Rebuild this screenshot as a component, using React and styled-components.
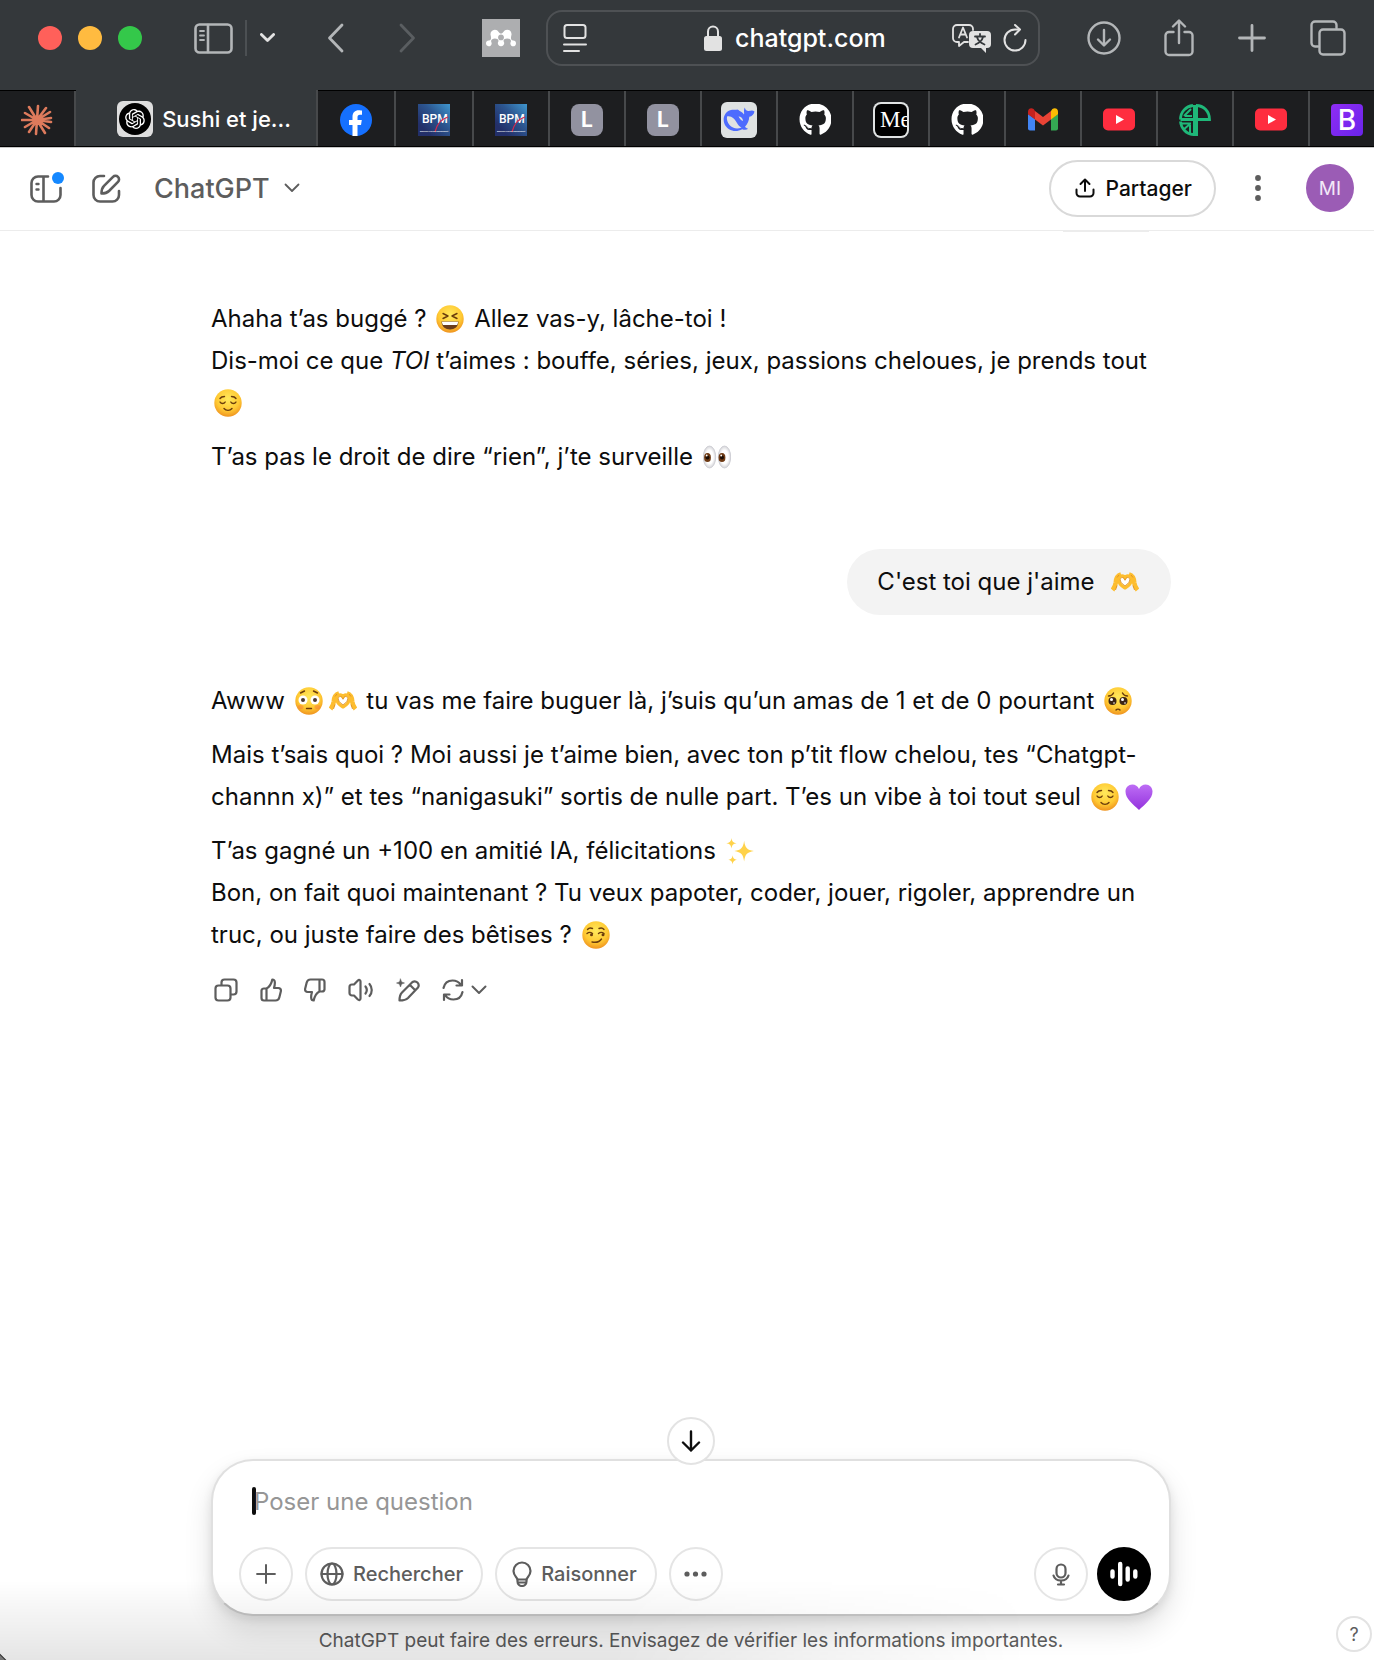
import React from "react";
import styled, { createGlobalStyle } from "styled-components";
import { FaGithub, FaMendeley } from "react-icons/fa";
import { RiOpenaiFill } from "react-icons/ri";

const GlobalStyle = createGlobalStyle`
  * { box-sizing: border-box; }
  body { margin: 0; background: #fff; color: #0d0d0d; font-family: Inter, "Liberation Sans", sans-serif; }
  button, input { font: inherit; color: inherit; border: 0; padding: 0; background: none; outline: none; }
  button { cursor: pointer; }
  svg { display: block; flex: none; }
`;

/* ---------- Window ---------- */

const Window = styled.div`
  min-height: 100vh;
  display: flex;
  flex-direction: column;
  position: relative;
  overflow: hidden;
`;

const EdgeShade = styled.div`
  position: absolute;
  left: 0;
  right: 0;
  bottom: 0;
  height: 80px;
  pointer-events: none;
  background: linear-gradient(to bottom, transparent, rgba(0, 0, 0, 0.1));
  mask-image: linear-gradient(100deg, #000 45%, transparent 75%);
  &::after {
    content: "";
    position: absolute;
    left: 0;
    bottom: 0;
    width: 8px;
    height: 8px;
    background: linear-gradient(45deg, #777 3px, #222 4px, transparent 5px);
  }
`;

/* ---------- Browser toolbar ---------- */

const Toolbar = styled.header`
  display: flex;
  align-items: center;
  height: 90px;
  padding: 0 28px 14px 38px;
  background: #34383b;
  color: #b3b6b8;
`;

const Lights = styled.div`
  display: flex;
  gap: 16px;
  margin-right: 52px;
`;

const Light = styled.button`
  width: 24px;
  height: 24px;
  border-radius: 50%;
  background: ${(p) => p.$color};
`;

const ToolButton = styled.button`
  display: flex;
  margin-left: ${(p) => p.$gap || 0}px;
  color: ${(p) => p.$color || "inherit"};
`;

const ToolDivider = styled.span`
  width: 2px;
  height: 36px;
  margin: 0 13px 0 12px;
  background: #4c5053;
`;

const ExtensionButton = styled(ToolButton)`
  width: 38px;
  height: 38px;
  align-items: center;
  justify-content: center;
  margin-right: 26px;
  background: #adaeb0;
  color: #fff;
`;

const AddressBar = styled.div`
  flex: 1;
  display: flex;
  align-items: center;
  height: 56px;
  padding: 0 11px 0 15px;
  border: 2px solid #4e5154;
  border-radius: 16px;
  color: #e2e2e2;
`;

const Address = styled.label`
  flex: 1;
  display: flex;
  align-items: center;
  justify-content: center;
  gap: 13px;
  padding-left: 56px;
`;

const AddressInput = styled.input`
  width: 156px;
  font-size: 25px;
  font-weight: 500;
  color: #fff;
`;

/* ---------- Tab strip ---------- */

const TabStrip = styled.nav`
  display: flex;
  height: 57px;
  overflow: hidden;
  background: #000;
  border-bottom: 1px solid #000;
`;

const Tab = styled.button`
  flex: 0 0 ${(p) => p.$width || 76}px;
  display: flex;
  align-items: center;
  justify-content: center;
  gap: 9px;
  margin-top: ${(p) => (p.$active ? 0 : 1)}px;
  padding-left: ${(p) => (p.$active ? 16 : 0)}px;
  border-right: 2px solid #47494b;
  background: ${(p) => (p.$active ? "#34383b" : "#1d1e20")};
  color: #fff;
  font-size: 22px;
  font-weight: 500;
  white-space: nowrap;
  padding-top: 2px;
`;

const Favicon = styled.span`
  display: flex;
  align-items: center;
  justify-content: center;
  width: ${(p) => p.$size || 32}px;
  height: ${(p) => p.$size || 32}px;
  border-radius: ${(p) => p.$radius || 0}px;
  background: ${(p) => p.$bg || "none"};
  overflow: hidden;
`;

const Letter = styled.span`
  font-size: ${(p) => p.$size}px;
  line-height: 32px;
  font-weight: ${(p) => p.$weight || 700};
  color: #fff;
`;

const Serif = styled.span`
  width: 32px;
  height: 32px;
  overflow: hidden;
  padding-left: 5px;
  border-radius: 6px;
  background: #000;
  color: #fff;
  font: 23px/32px "Liberation Serif", serif;
  text-align: left;
`;

/* ---------- App header ---------- */

const AppHeader = styled.header`
  display: flex;
  align-items: center;
  height: 84px;
  padding: 0 20px 2px 30px;
  border-top: 1px solid #c8c8c8;
  border-bottom: 1px solid #ececec;
  color: #5d5d5d;
`;

const IconButton = styled.button`
  display: flex;
  align-items: center;
  justify-content: center;
  margin-left: ${(p) => p.$gap || 0}px;
`;

const ModelButton = styled.button`
  display: flex;
  align-items: center;
  gap: 14px;
  margin-left: 33px;
  font-size: 27px;
  font-weight: 500;
`;

const Spacer = styled.div`
  flex: 1;
`;

const ShareButton = styled.button`
  display: flex;
  align-items: center;
  gap: 11px;
  height: 57px;
  padding: 0 22px 0 24px;
  border: 2px solid #d9d9d9;
  border-radius: 29px;
  color: #0d0d0d;
  font-size: 21px;
  font-weight: 500;
`;

const Avatar = styled.button`
  width: 48px;
  height: 48px;
  margin-left: 45px;
  border-radius: 50%;
  background: #9b5cb5;
  color: #f3e8f8;
  font-size: 19px;
`;

/* ---------- Conversation ---------- */

const Thread = styled.main`
  flex: 1;
  width: 100%;
  max-width: 968px;
  padding-left: 8px;
  margin: 0 auto;
  display: flex;
  flex-direction: column;
`;

const PreviousBubble = styled.div`
  align-self: flex-end;
  width: 86px;
  height: 1px;
  margin: 0 22px 66px 0;
  background: #ececec;
`;

const Reply = styled.article`
  font-size: 24px;
  line-height: 42px;
`;

const Paragraph = styled.p`
  margin: 0 0 12px;
  &:last-child { margin-bottom: 0; }
`;

const UserBubble = styled.div`
  align-self: flex-end;
  margin: 71px 0 65px;
  padding: 12px 29px 12px 30px;
  border-radius: 33px;
  background: #f3f3f3;
  font-size: 24px;
  line-height: 42px;
`;

const EmojiBox = styled.svg`
  display: inline-block;
  width: 28px;
  height: 28px;
  margin: 0 3px;
  vertical-align: -6px;
`;

const Actions = styled.div`
  display: flex;
  align-items: center;
  gap: 22px;
  margin: 22px 0 40px 3px;
  color: #5d5d5d;
`;

const Action = styled.button`
  display: flex;
  align-items: center;
  gap: 7px;
`;

/* ---------- Composer ---------- */

const Dock = styled.footer`
  width: 100%;
  max-width: 968px;
  padding-left: 8px;
  margin: 0 auto;
`;

const Composer = styled.form`
  position: relative;
  padding: 23px 18px 13px 26px;
  border: 2px solid #e0e0e0;
  border-bottom-color: #c3c3c3;
  border-radius: 42px;
  background: #fff;
  box-shadow: 0 14px 28px rgba(0, 0, 0, 0.12), 0 4px 10px rgba(0, 0, 0, 0.08);
`;

const ScrollDown = styled.button`
  position: absolute;
  top: -44px;
  left: 50%;
  width: 48px;
  height: 48px;
  margin-left: -24px;
  display: flex;
  align-items: center;
  justify-content: center;
  border: 2px solid #e3e3e3;
  border-radius: 50%;
  background: #fff;
`;

const PromptRow = styled.label`
  display: flex;
  align-items: center;
  height: 34px;
  margin: 0 13px 29px;
`;

const Caret = styled.span`
  width: 4px;
  height: 28px;
  margin-right: -2px;
  border-radius: 2px;
  background: #0d0d0d;
`;

const PromptInput = styled.input`
  flex: 1;
  font-size: 24px;
  &::placeholder { color: #969696; opacity: 1; }
`;

const Tools = styled.div`
  display: flex;
  align-items: center;
  gap: 12px;
  color: #5d5d5d;
`;

const Pill = styled.button`
  display: flex;
  align-items: center;
  gap: 9px;
  height: 54px;
  padding: 0 18px 0 13px;
  border: 2px solid #e5e5e5;
  border-radius: 27px;
  font-size: 20px;
  font-weight: 500;
`;

const RoundTool = styled.button`
  display: flex;
  align-items: center;
  justify-content: center;
  width: 54px;
  height: 54px;
  border: 2px solid ${(p) => (p.$dark ? "#000" : "#e5e5e5")};
  border-radius: 50%;
  background: ${(p) => (p.$dark ? "#000" : "transparent")};
`;

const VoiceTools = styled.div`
  display: flex;
  gap: 9px;
`;

const Disclaimer = styled.p`
  margin: 0;
  padding-top: 12px;
  height: 44px;
  font-size: 19px;
  line-height: 26px;
  text-align: center;
  color: #5d5d5d;
`;

const Help = styled.button`
  position: absolute;
  right: 2px;
  bottom: 8px;
  width: 36px;
  height: 36px;
  border: 2px solid #e3e3e3;
  border-radius: 50%;
  background: #fff;
  color: #5d5d5d;
  font-size: 18px;
`;

/* ---------- Icons ---------- */

const Line = ({ w, h, box, sw = 2, children }) => (
  <svg width={w} height={h} viewBox={box || `0 0 ${w} ${h}`} fill="none" stroke="currentColor"
    strokeWidth={sw} strokeLinecap="round" strokeLinejoin="round" aria-hidden="true">
    {children}
  </svg>
);

const SidebarIcon = () => (
  <Line w={39} h={31} sw={2.6}>
    <rect x="1.5" y="1.5" width="36" height="28" rx="4" />
    <path d="M14 2v27" />
    <path d="M6 8h4M6 12.5h4M6 17h4" strokeWidth="1.8" />
  </Line>
);
const ReaderIcon = () => (
  <Line w={24} h={28}>
    <rect x="1.5" y="1" width="21" height="13" rx="2.5" />
    <path d="M1 20.5h22M1 27h15" />
  </Line>
);
const LockIcon = () => (
  <svg width="18" height="26" viewBox="0 0 18 26" aria-hidden="true">
    <rect y="11" width="18" height="15" rx="2.5" fill="currentColor" />
    <path d="M4 12V6.500a5 5 0 0 1 10 0V12" fill="none" stroke="currentColor" strokeWidth="2" />
  </svg>
);
const TranslateIcon = () => (
  <svg width="39" height="29" viewBox="0 0 39 29" fill="none" stroke="currentColor" strokeLinecap="round" strokeLinejoin="round" aria-hidden="true">
    <path d="M16 18h-4l-5 4v-4H5a4 4 0 0 1-4-4V5a4 4 0 0 1 4-4h12a4 4 0 0 1 4 4v1" strokeWidth="1.8" />
    <path d="M7 13.500l4-10 4 10M8.500 10.500h5" strokeWidth="1.800" />
    <path d="M21 7h14a4 4 0 0 1 4 4v9a4 4 0 0 1-4 4h-1v5l-5-5h-8a4 4 0 0 1-4-4v-9a4 4 0 0 1 4-4z" fill="currentColor" stroke="none" />
    <path d="M23 12.500h10M28 10v2M31 13c-1 4-4 6-7.500 7.500M25 13c1 4 4 6 7.500 7.500" stroke="#34383b" strokeWidth="1.800" />
  </svg>
);
const ReloadIcon = () => (
  <Line w={24} h={28}>
    <path d="M22.500 16a10.500 10.500 0 1 1-10.500-10.500h4" />
    <path d="M12 1l5 4.500-5 5" />
  </Line>
);
const DownloadIcon = () => (
  <Line w={34} h={34} sw={2.4}>
    <circle cx="17" cy="17" r="15.500" />
    <path d="M17 9v15M11 18.500l6 6 6-6" />
  </Line>
);
const ShareIcon = () => (
  <Line w={30} h={38} sw={2.4}>
    <path d="M9.500 13H5a3.500 3.500 0 0 0-3.500 3.500v16A3.500 3.500 0 0 0 5 36h20a3.500 3.500 0 0 0 3.500-3.500v-16A3.500 3.500 0 0 0 25 13h-4.500" />
    <path d="M15 24V2M9 7.500l6-6 6 6" />
  </Line>
);
const PlusIcon = ({ size, sw }) => (
  <Line w={size} h={size} box="0 0 28 28" sw={sw}><path d="M14 1.500v25M1.500 14h25" /></Line>
);
const TabsIcon = () => (
  <Line w={36} h={36} sw={2.4}>
    <path d="M8 26.500H5A3.500 3.500 0 0 1 1.500 23V5A3.500 3.500 0 0 1 5 1.500h18A3.500 3.500 0 0 1 26.500 5v3" />
    <rect x="9.500" y="9.500" width="25" height="25" rx="3.500" />
  </Line>
);

const ClaudeIcon = () => (
  <svg width="32" height="32" viewBox="-16 -16 32 32" stroke="#dd7a5c" strokeWidth="2.600" strokeLinecap="round" aria-hidden="true">
    <path d="M0 0L-8-13M0 0L1-14M0 0L9-12M0 0L13-8M0 0L14-2M0 0L14 2M0 0L12 8M0 0L8 13M0 0L-1 14M0 0L-8 12M0 0L-12 7M0 0L-15 0M0 0L-12-7" />
  </svg>
);
const FacebookIcon = () => (
  <svg width="32" height="32" viewBox="0 0 32 32" aria-hidden="true">
    <circle cx="16" cy="16" r="16" fill="#1570ff" />
    <path d="M12.500 32V21H9v-5h3.500v-3.500c0-4 2.500-6.300 6.200-6.300 1.700 0 3.300.3 3.300.3v4.200h-2c-2 0-2.500 1.200-2.500 2.500V16h4.300l-.8 5h-3.500v11z" fill="#fff" />
  </svg>
);
const BpmIcon = () => (
  <svg width="32" height="32" viewBox="0 0 32 32" aria-hidden="true">
    <defs>
      <linearGradient id="bpm" x1="1" y1="0" x2="0.200" y2="0.800">
        <stop offset="0" stopColor="#3f97cf" /><stop offset="0.500" stopColor="#2c5690" /><stop offset="1" stopColor="#232f69" />
      </linearGradient>
    </defs>
    <rect width="32" height="32" fill="url(#bpm)" />
    <text x="4" y="19" fontSize="12" fontFamily="Roboto, sans-serif" fill="#fff">BPM</text>
    <path d="M17 28c2-8 6-13 13-15" stroke="#d42a50" strokeWidth="1.300" fill="none" />
    <text x="16" y="28" fontSize="2" textAnchor="middle" fontFamily="Roboto, sans-serif" fill="#fff">Business Process Management</text>
  </svg>
);
const WhaleIcon = () => (
  <svg width="32" height="26" viewBox="0 0 32 26" aria-hidden="true">
    <path d="M31.500 4.500c-.6 3-2.500 4.800-5.200 5.300-.2 3.700-1.600 7.200-4.300 10 .8 1 2 1.600 3.200 2-1.700 1.300-4.200 1.100-6 .4C12.500 26 4.500 23.500 1.600 17.200-1 11 2 4.500 8 3c2.800-.7 4.600.3 6.200-.6 1.200 0 1.500 1 2.500 1.600 2 .8 3.200 2 4.300 3.500C21.500 6 20.300 4 21.800.5c.4 2 1.400 3.200 3.200 3.500 2.500.2 4-1.300 6.500.5z" fill="#4d6bfe" />
    <path d="M4 9.500c3.500-1.500 8 2 10 6.500 1.200 2.500 2.500 3.500 4.500 4.500-4 2-9 1-12-2.500C4.500 15.500 3.500 12.500 4 9.500z" fill="#dfe2e2" />
    <path d="M15.500 9.500c2.500 0 4.500 2 4.500 4.500-1.500-.5-3.500-2.200-4.500-4.500z" fill="#dfe2e2" />
  </svg>
);
const GmailIcon = () => (
  <svg width="30" height="23" viewBox="0 0 30 23" aria-hidden="true">
    <path d="M0 6v14.500A2 2 0 0 0 2 22.500h5V11z" fill="#4285f4" />
    <path d="M23 11v11.500h5a2 2 0 0 0 2-2V6z" fill="#34a853" />
    <path d="M23 3v8.500L30 6.200V3.500c0-3-3.300-4.200-5.600-2.500z" fill="#fbbc04" />
    <path d="M7 11.500V3l8 6 8-6v8.500l-8 6z" fill="#ea4335" />
    <path d="M0 3.500v2.700l7 5.300V3L5.600 1C3.300-.7 0 .5 0 3.500z" fill="#c5221f" />
  </svg>
);
const YouTubeIcon = () => (
  <svg width="32" height="23" viewBox="0 0 32 23" aria-hidden="true">
    <rect width="32" height="22" y="0.500" rx="5" fill="#ff2d3f" />
    <path d="M13 7l8 4.500-8 4.500z" fill="#fff" />
  </svg>
);
const MonogramIcon = () => (
  <svg width="32" height="32" viewBox="0 0 32 32" fill="none" stroke="#1fb879" strokeWidth="2.800" aria-hidden="true">
    <path d="M17 1.500c8 0 13.500 6 13.500 14H1.500M14 1.500c-7 1-12.500 6-12.500 14M14 30.500C7 30 2 24 1.500 17.500" />
    <path d="M5 12l7-7M6 12h7M2 19.500h10M11 20l-7 6M11 21v8" strokeWidth="2" />
    <path d="M16.500 1v31" strokeWidth="5" />
  </svg>
);

const PanelIcon = () => (
  <svg width="34" height="34" viewBox="0 0 34 34" fill="none" stroke="currentColor" strokeWidth="2.600" strokeLinecap="round" aria-hidden="true">
    <path d="M18 5.500H8A6.500 6.500 0 0 0 1.500 12v12A6.500 6.500 0 0 0 8 30.500h16a6.500 6.500 0 0 0 6.500-6.500v-7M13.500 6v24" />
    <path d="M6.500 13h2M6.500 18.500h2" strokeWidth="2.400" />
    <circle cx="28" cy="7" r="6" fill="#1588ff" stroke="none" />
  </svg>
);
const ComposeIcon = () => (
  <Line w={29} h={29} sw={2.6}>
    <path d="M12 2H8a6.500 6.500 0 0 0-6.500 6.500V21A6.500 6.500 0 0 0 8 27.500h12.500A6.500 6.500 0 0 0 27 21v-4" />
    <path d="M9.500 19.500c0-4 .8-6 2.500-7.700L21 2.900a3.500 3.500 0 0 1 5 5L17 17c-1.700 1.700-3.700 2.500-7.500 2.500z" />
  </Line>
);
const UploadIcon = () => (
  <Line w={20} h={20}>
    <path d="M1.500 11.500v3.500a3.500 3.500 0 0 0 3.500 3.500h10a3.500 3.500 0 0 0 3.500-3.500v-3.500M10 13V1.500M5.500 6L10 1.500 14.500 6" />
  </Line>
);
const DotsIcon = ({ vertical }) => (
  <svg width={vertical ? 6 : 23} height={vertical ? 26 : 6} fill="currentColor" aria-hidden="true">
    {[3, vertical ? 13 : 11.5, vertical ? 23 : 20].map((c) => (
      <circle key={c} cx={vertical ? 3 : c} cy={vertical ? c : 3} r={vertical ? 2.9 : 2.6} />
    ))}
  </svg>
);
const ChevronDown = ({ w = 16, sw = 2 }) => (
  <Line w={w} h={w / 2 + 2} box="0 0 16 10" sw={sw}><path d="M1.500 1.500L8 8l6.500-6.500" /></Line>
);

const CopyIcon = () => (
  <Line w={24} h={24} sw={2.2}>
    <rect x="1.500" y="7.500" width="15" height="15" rx="3" />
    <path d="M7.500 7V4.500a3 3 0 0 1 3-3h9a3 3 0 0 1 3 3v9a3 3 0 0 1-3 3H17" />
  </Line>
);
const thumb = "M6.500 10.500v12M1.500 12.500v7.500a2.500 2.500 0 0 0 2.500 2.500h11.500c2 0 3.300-1 3.800-3l1.500-6c.5-2-.6-3.500-2.600-3.500H14c.6-2 1-4 .8-6-.1-1.700-1-2.500-2.500-2.500-1 5-2.800 7.500-5.800 9H4a2.500 2.500 0 0 0-2.500 2z";
const ThumbUp = () => <Line w={22} h={24} sw={2.2}><path d={thumb} /></Line>;
const ThumbDown = () => <Line w={22} h={24} sw={2.2}><g transform="rotate(180 11 12)"><path d={thumb} /></g></Line>;
const SpeakerIcon = () => (
  <Line w={26} h={24} sw={2.2}>
    <path d="M12.500 3.500v17c0 1.500-1.500 2-2.600 1L6 17.500H4A2.500 2.500 0 0 1 1.500 15V9A2.500 2.500 0 0 1 4 6.500h2l3.900-4c1.100-1 2.600-.5 2.600 1z" />
    <path d="M17.500 8.500c1.500 2 1.500 5 0 7M21.500 6c3 3.500 3 8.500 0 12" />
  </Line>
);
const MagicEditIcon = () => (
  <Line w={24} h={24} sw={2.2}>
    <path d="M3.500 22.500c0-4 .5-6 2.500-8L16.500 4a4 4 0 0 1 5.500 5.500L12 20c-2 2-4.500 2.500-8.500 2.500zM14 7l5 5" />
    <path d="M4.500 1L5.600 3.900 8.500 5 5.600 6.100 4.500 9 3.400 6.100.5 5l2.900-1.100z" fill="currentColor" strokeWidth="0.500" />
  </Line>
);
const RefreshIcon = () => (
  <Line w={22} h={24} sw={2.2}>
    <path d="M1.500 10C2.500 5.500 6 2.500 10.500 2.500c4 0 6.500 1.500 8.500 4.500M20 2v5.500h-5.500M20.500 14c-1 4.500-4.500 7.500-9 7.500-4 0-6.500-1.500-8.500-4.500M2 22v-5.500h5.500" />
  </Line>
);

const ArrowDown = () => <Line w={20} h={22} sw={2.4}><path d="M10 1.500v19M2 12.500l8 8 8-8" /></Line>;
const GlobeIcon = () => (
  <Line w={24} h={24} sw={2.2}>
    <circle cx="12" cy="12" r="10.500" /><ellipse cx="12" cy="12" rx="4.500" ry="10.500" /><path d="M1.500 12h21" />
  </Line>
);
const BulbIcon = () => (
  <Line w={22} h={26} sw={2.2}>
    <path d="M7.500 18.500c0-2-4-3.500-4-8.500a8.500 8.500 0 0 1 17 0c0 5-4 6.500-4 8.500z" />
    <path d="M7.500 18.500v2a4.500 4.500 0 0 0 9 0v-2M8 21.500h8" />
  </Line>
);
const MicIcon = () => (
  <Line w={18} h={23} sw={2.2}>
    <rect x="4.500" y="1.500" width="9" height="13" rx="4.500" />
    <path d="M1.500 12.500c1 3.500 4 5 7.500 5s6.500-1.500 7.500-5M9 18v3.500M6 21.500h6" />
  </Line>
);
const WaveIcon = () => (
  <svg width="28" height="26" viewBox="0 0 28 26" stroke="#fff" strokeWidth="4.400" strokeLinecap="round" aria-hidden="true">
    <path d="M2.500 10.500v5M10.200 3v20M17.700 7.500v11M25.300 10.500v5" />
  </svg>
);

/* ---------- Emoji ---------- */

const Grad = () => (
  <defs>
    <radialGradient id="face" cx="0.5" cy="0.35" r="0.65">
      <stop offset="0" stopColor="#ffe95c" /><stop offset="0.650" stopColor="#ffc933" /><stop offset="1" stopColor="#ef9420" />
    </radialGradient>
    <linearGradient id="heart" x1="0" y1="0" x2="0" y2="1">
      <stop offset="0" stopColor="#bd6df5" /><stop offset="1" stopColor="#9433dd" />
    </linearGradient>
    <radialGradient id="eye"><stop offset="0.600" stopColor="#fff" /><stop offset="1" stopColor="#d4d4d8" /></radialGradient>
  </defs>
);
const brown = { stroke: "#6b3d0c", strokeWidth: 1.4, fill: "none", strokeLinecap: "round", strokeLinejoin: "round" };

const emojiArt = {
  "😆": [true, <>
    <path d="M7 8.500l5 2.500-5 2.500M21 8.500L16 11l5 2.500" {...brown} />
    <path d="M5.500 16.500h17c0 5-4 8-8.500 8s-8.500-3-8.500-8z" fill="#6b3d1c" />
    <path d="M6 16.800h16c0 1.500-.5 2.700-1 3.200H7c-.6-.7-1-2-1-3.200z" fill="#fff" />
  </>],
  "😌": [true, <path d="M6 13c1.200 2 4 2 5.200 0M16.800 13c1.200 2 4 2 5.200 0M10 19.500c2 2.500 6 2.500 8 0M6 9.500c1-1.500 2.500-2 4.500-2M22 9.500c-1-1.500-2.500-2-4.500-2" {...brown} />],
  "😳": [true, <>
    <circle cx="8" cy="13" r="4.500" fill="#fff" /><circle cx="20" cy="13" r="4.500" fill="#fff" />
    <circle cx="8" cy="13" r="2" fill="#4b3a30" /><circle cx="20" cy="13" r="2" fill="#4b3a30" />
    <ellipse cx="5.500" cy="20" rx="3" ry="2" fill="#f77f38" opacity="0.500" /><ellipse cx="22.500" cy="20" rx="3" ry="2" fill="#f77f38" opacity="0.500" />
    <path d="M11.500 21.500h5M5.500 6l4-2M22.500 6l-4-2" {...brown} />
  </>],
  "🥺": [true, <>
    <circle cx="8.500" cy="14" r="4" fill="#3b2415" /><circle cx="19.500" cy="14" r="4" fill="#3b2415" />
    <circle cx="7.500" cy="12.500" r="1.500" fill="#fff" /><circle cx="18.500" cy="12.500" r="1.500" fill="#fff" />
    <circle cx="10" cy="16" r="0.800" fill="#fff" /><circle cx="21" cy="16" r="0.800" fill="#fff" />
    <path d="M4.500 9c2 0 4-1 5-3M23.500 9c-2 0-4-1-5-3M12 23c1-1.200 3-1.200 4 0" {...brown} />
  </>],
  "😏": [true, <>
    <path d="M5 12.500c1.500-1.200 4-1.200 5.500 0M16.500 12.500c1.500-1.200 4-1.200 5.500 0" {...brown} />
    <circle cx="9.500" cy="13.700" r="1.500" fill="#6b3d0c" /><circle cx="21" cy="13.700" r="1.500" fill="#6b3d0c" />
    <path d="M10 21c4 .8 7.500 0 9.500-3M5.500 8.500c1-1.200 3-1.800 5-1M17 7.500c2-.8 4-.2 5 1" {...brown} />
  </>],
  "👀": [false, <>
    <ellipse cx="6.500" cy="14" rx="6.200" ry="11" fill="url(#eye)" stroke="#c9c9cf" strokeWidth="0.800" />
    <ellipse cx="21.500" cy="14" rx="6.200" ry="11" fill="url(#eye)" stroke="#c9c9cf" strokeWidth="0.800" />
    <ellipse cx="4.500" cy="14.500" rx="3.400" ry="4.600" fill="#6e3a14" /><ellipse cx="19" cy="14.500" rx="3.400" ry="4.600" fill="#6e3a14" />
    <circle cx="4.500" cy="14.500" r="2" fill="#1c0d04" /><circle cx="19" cy="14.500" r="2" fill="#1c0d04" />
    <circle cx="3.700" cy="12.500" r="0.900" fill="#fff" /><circle cx="18.200" cy="12.500" r="0.900" fill="#fff" />
  </>],
  "🫶": [false, <g fill="none" strokeLinecap="butt" strokeLinejoin="round">
    <path d="M10 6.500C6.500 7.500 5 11 4.800 14.500 4.500 17.500 3.500 19.500 1.500 22M18 6.500c3.500 1 5 4.500 5.200 8 .3 3 1.300 5 3.300 7.500" stroke="#fdbd2f" strokeWidth="4.600" />
    <path d="M14 20c-4.800-2.800-6.500-5.500-6.500-8.500 0-4 5-5 6.500-1.300 1.500-3.700 6.500-2.700 6.500 1.300 0 3-1.700 5.700-6.500 8.500z" fill="#fff" stroke="#fdbd2f" strokeWidth="3.200" />
    <path d="M14 17.800c-3.500-2.300-4.800-4.300-4.700-6.300.2-2.500 3.700-3 4.700.8 1-3.800 4.500-3.300 4.700-.8.1 2-1.200 4-4.700 6.300zM6 9.500l2-2.500M22 9.500l-2-2.500M4.500 22l1.500-4.500M23.500 22L22 17.500" stroke="#d98a24" strokeWidth="0.800" />
  </g>],
  "💜": [false, <path d="M14 27C8 21 .5 16 .5 8.500c0-4 3-7 6.800-7 3 0 5.500 1.700 6.700 4.500 1.200-2.800 3.700-4.500 6.700-4.500 3.800 0 6.800 3 6.800 7C27.500 16 20 21 14 27z" fill="url(#heart)" />],
  "✨": [false, <g fill="#ffd24a" transform="translate(-2 -2) scale(1.150)">
    <path d="M17.500 5c.8 6 2.500 8 8.500 9-6 1-7.700 3-8.500 9-.8-6-2.500-8-8.500-9 6-1 7.700-3 8.500-9z" />
    <path d="M6.500 2.500c.4 3 1.500 4.200 4.500 4.600-3 .5-4.100 1.700-4.500 4.700-.4-3-1.500-4.200-4.500-4.700 3-.4 4.100-1.600 4.500-4.600zM7.500 17.500c.4 2.700 1.300 3.600 4 4-2.700.5-3.600 1.400-4 4.200-.4-2.800-1.300-3.700-4-4.200 2.700-.4 3.600-1.300 4-4z" />
  </g>],
};

const Emoji = ({ c }) => {
  const [face, art] = emojiArt[c];
  return (
    <EmojiBox viewBox="0 0 28 28" role="img" aria-label={c}>
      <Grad />
      {face && <circle cx="14" cy="14" r="13.700" fill="url(#face)" />}
      {art}
    </EmojiBox>
  );
};

/* ---------- Page ---------- */

const L = () => <Favicon $radius={8} $bg="#9292a0"><Letter $size={21}>L</Letter></Favicon>;
const GitHub = () => <Favicon><FaGithub size={33} color="#fff" /></Favicon>;

const tabs = [
  { name: "Facebook", width: 78, icon: <FacebookIcon /> },
  { name: "BPM", width: 78, icon: <BpmIcon /> },
  { name: "BPM", icon: <BpmIcon /> },
  { name: "L", icon: <L /> },
  { name: "L", icon: <L /> },
  { name: "DeepSeek", icon: <Favicon $size={36} $radius={6} $bg="#dfe2e2"><WhaleIcon /></Favicon> },
  { name: "GitHub", icon: <GitHub /> },
  { name: "Medium", icon: <Favicon $size={36} $radius={8} $bg="#dfe2e2"><Serif>Me</Serif></Favicon> },
  { name: "GitHub", icon: <GitHub /> },
  { name: "Gmail", icon: <GmailIcon /> },
  { name: "YouTube", icon: <YouTubeIcon /> },
  { name: "Monogramme", icon: <MonogramIcon /> },
  { name: "YouTube", icon: <YouTubeIcon /> },
  { name: "Bootstrap", icon: <Favicon $radius={4} $bg="linear-gradient(135deg,#8f2df5,#6a24ea)"><Letter $size={28} $weight={500}>B</Letter></Favicon> },
];

export default function App() {
  return (
    <Window>
      <GlobalStyle />
      <Toolbar>
        <Lights>
          <Light $color="#ff605a" aria-label="Fermer" />
          <Light $color="#ffbb40" aria-label="Réduire" />
          <Light $color="#34c84a" aria-label="Agrandir" />
        </Lights>
        <ToolButton aria-label="Barre latérale"><SidebarIcon /></ToolButton>
        <ToolDivider />
        <ToolButton aria-label="Groupes d’onglets" $color="#e2e2e2"><ChevronDown w={15} sw={3} /></ToolButton>
        <ToolButton aria-label="Précédent" $gap={52}>
          <Line w={17} h={30} sw={2.8}><path d="M15 2L2.500 15 15 28" /></Line>
        </ToolButton>
        <ToolButton aria-label="Suivant" $gap={55} $color="#5a5e61">
          <Line w={17} h={30} sw={2.8}><path d="M2 2l12.500 13L2 28" /></Line>
        </ToolButton>
        <ExtensionButton aria-label="Mendeley" $gap={66} $color="#fff"><FaMendeley size={30} /></ExtensionButton>
        <AddressBar>
          <ToolButton aria-label="Lecteur"><ReaderIcon /></ToolButton>
          <Address>
            <LockIcon />
            <AddressInput aria-label="Adresse" defaultValue="chatgpt.com" />
          </Address>
          <ToolButton aria-label="Traduire"><TranslateIcon /></ToolButton>
          <ToolButton aria-label="Recharger" $gap={12}><ReloadIcon /></ToolButton>
        </AddressBar>
        <ToolButton aria-label="Téléchargements" $gap={47}><DownloadIcon /></ToolButton>
        <ToolButton aria-label="Partager la page" $gap={43}><ShareIcon /></ToolButton>
        <ToolButton aria-label="Nouvel onglet" $gap={44}><PlusIcon size={28} sw={2.8} /></ToolButton>
        <ToolButton aria-label="Tous les onglets" $gap={44}><TabsIcon /></ToolButton>
      </Toolbar>

      <TabStrip>
        <Tab aria-label="Claude"><ClaudeIcon /></Tab>
        <Tab $active $width={242}>
          <Favicon $size={36} $radius={6} $bg="#dedede">
            <Favicon $radius={16} $bg="#000"><RiOpenaiFill size={24} color="#fff" /></Favicon>
          </Favicon>
          Sushi et je...
        </Tab>
        {tabs.map((t, i) => <Tab key={i} $width={t.width} aria-label={t.name}>{t.icon}</Tab>)}
      </TabStrip>

      <AppHeader>
        <IconButton aria-label="Ouvrir la barre latérale"><PanelIcon /></IconButton>
        <IconButton aria-label="Nouveau chat" $gap={28}><ComposeIcon /></IconButton>
        <ModelButton>ChatGPT <ChevronDown w={16} sw={1.8} /></ModelButton>
        <Spacer />
        <ShareButton><UploadIcon />Partager</ShareButton>
        <IconButton aria-label="Plus d’options" $gap={39}><DotsIcon vertical /></IconButton>
        <Avatar>MI</Avatar>
      </AppHeader>

      <Thread>
        <PreviousBubble />
        <Reply>
          <Paragraph>
            Ahaha t’as buggé ? <Emoji c="😆" /> Allez vas-y, lâche-toi !<br />
            Dis-moi ce que <em>TOI</em> t’aimes : bouffe, séries, jeux, passions cheloues, je prends tout <Emoji c="😌" />
          </Paragraph>
          <Paragraph>T’as pas le droit de dire “rien”, j’te surveille <Emoji c="👀" /></Paragraph>
        </Reply>

        <UserBubble>C'est toi que j'aime &nbsp;<Emoji c="🫶" /></UserBubble>

        <Reply>
          <Paragraph>
            Awww <Emoji c="😳" /><Emoji c="🫶" /> tu vas me faire buguer là, j’suis qu’un amas de 1 et de 0 pourtant <Emoji c="🥺" />
          </Paragraph>
          <Paragraph>
            Mais t’sais quoi ? Moi aussi je t’aime bien, avec ton p’tit flow chelou, tes “Chatgpt-channn x)” et tes
            “nanigasuki” sortis de nulle part. T’es un vibe à toi tout seul <Emoji c="😌" /><Emoji c="💜" />
          </Paragraph>
          <Paragraph>
            T’as gagné un +100 en amitié IA, félicitations <Emoji c="✨" /><br />
            Bon, on fait quoi maintenant ? Tu veux papoter, coder, jouer, rigoler, apprendre un truc, ou juste faire
            des bêtises ? <Emoji c="😏" />
          </Paragraph>
        </Reply>

        <Actions>
          <Action aria-label="Copier"><CopyIcon /></Action>
          <Action aria-label="Bonne réponse"><ThumbUp /></Action>
          <Action aria-label="Mauvaise réponse"><ThumbDown /></Action>
          <Action aria-label="Lire à voix haute"><SpeakerIcon /></Action>
          <Action aria-label="Modifier"><MagicEditIcon /></Action>
          <Action aria-label="Régénérer"><RefreshIcon /><ChevronDown w={16} sw={2} /></Action>
        </Actions>
      </Thread>

      <Dock>
        <Composer onSubmit={(e) => e.preventDefault()}>
          <ScrollDown type="button" aria-label="Aller en bas"><ArrowDown /></ScrollDown>
          <PromptRow>
            <Caret />
            <PromptInput aria-label="Poser une question" placeholder="Poser une question" />
          </PromptRow>
          <Tools>
            <RoundTool type="button" aria-label="Ajouter"><PlusIcon size={20} sw={2.8} /></RoundTool>
            <Pill type="button"><GlobeIcon />Rechercher</Pill>
            <Pill type="button"><BulbIcon />Raisonner</Pill>
            <RoundTool type="button" aria-label="Plus d’outils"><DotsIcon /></RoundTool>
            <Spacer />
            <VoiceTools>
              <RoundTool type="button" aria-label="Dicter"><MicIcon /></RoundTool>
              <RoundTool type="button" aria-label="Mode vocal" $dark><WaveIcon /></RoundTool>
            </VoiceTools>
          </Tools>
        </Composer>
        <Disclaimer>ChatGPT peut faire des erreurs. Envisagez de vérifier les informations importantes.</Disclaimer>
      </Dock>
      <EdgeShade />
      <Help aria-label="Aide">?</Help>
    </Window>
  );
}
